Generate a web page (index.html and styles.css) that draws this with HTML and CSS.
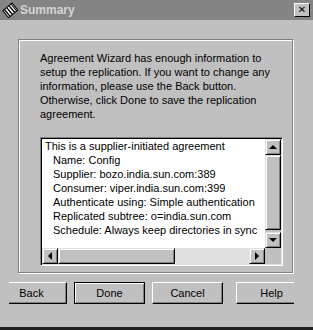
FILE: index.html
```html
<!DOCTYPE html>
<html lang="en">
<head>
<meta charset="UTF-8">
<title>Summary</title>
<link rel="stylesheet" href="styles.css">
</head>
<body>

<div class="window">
    <div class="titlebar">
        <svg class="app-icon" width="16" height="16" viewBox="0 0 16 16">
            <g transform="rotate(-40 8 8)">
                <rect x="2" y="4" width="12" height="9" fill="#fff" stroke="#000" stroke-width="1"/>
                <line x1="4" y1="4" x2="4" y2="13" stroke="#000" stroke-width="1.4"/>
                <line x1="7" y1="4" x2="7" y2="13" stroke="#000" stroke-width="1.4"/>
                <line x1="10" y1="4" x2="10" y2="13" stroke="#000" stroke-width="1.4"/>
                <line x1="12.5" y1="4" x2="12.5" y2="13" stroke="#000" stroke-width="1"/>
            </g>
        </svg>
        <span class="title">Summary</span>
        <button class="close-btn">&#x2715;</button>
    </div>

    <div class="content">
        <div class="panel">
            <p class="intro">Agreement Wizard has enough information to setup the replication. If you want to change any information, please use the Back button. Otherwise, click Done to save the replication agreement.</p>

            <div class="listbox">
                <div class="list-main">
                    <div class="list-text">
                        <div class="line">This is a supplier-initiated agreement</div>
                        <div class="line sub">Name: Config</div>
                        <div class="line sub">Supplier: bozo.india.sun.com:389</div>
                        <div class="line sub">Consumer: viper.india.sun.com:399</div>
                        <div class="line sub">Authenticate using: Simple authentication</div>
                        <div class="line sub">Replicated subtree: o=india.sun.com</div>
                        <div class="line sub">Schedule: Always keep directories in sync</div>
                    </div>
                    <div class="vscroll">
                        <div class="sb-btn"><span class="arrow up"></span></div>
                        <div class="sb-thumb v-thumb"></div>
                        <div class="sb-track v-track"></div>
                        <div class="sb-btn"><span class="arrow down"></span></div>
                    </div>
                </div>
                <div class="list-bottom">
                    <div class="hscroll">
                        <div class="sb-btn"><span class="arrow left"></span></div>
                        <div class="sb-thumb h-thumb"></div>
                        <div class="sb-track h-track"></div>
                        <div class="sb-btn"><span class="arrow right"></span></div>
                    </div>
                    <div class="corner"></div>
                </div>
            </div>
        </div>

        <div class="buttons">
            <div class="button-row">
                <button class="btn back">Back</button>
                <button class="btn default">Done</button>
                <button class="btn">Cancel</button>
                <button class="btn help">Help</button>
            </div>
        </div>
    </div>
</div>

</body>
</html>
```

FILE: styles.css
```css
body {
    margin: 0;
    padding: 0;
    background-color: #c0c0c0;
    font-family: "Liberation Sans", Arial, sans-serif;
    font-size: 11px;
    color: #000;
}
.window {
    width: 313px;
    height: 330px;
    box-sizing: border-box;
    border-bottom: 3px solid #202020;
    display: flex;
    flex-direction: column;
}
.titlebar {
    height: 20px;
    background-color: #848484;
    display: flex;
    align-items: center;
    padding: 0 3px 0 2px;
}
.app-icon {
    display: block;
}
.title {
    margin-left: 2px;
    font-weight: bold;
    font-size: 12px;
    color: #d4d4d4;
    flex: 1;
}
.close-btn {
    width: 16px;
    height: 14px;
    padding: 0;
    margin: 0;
    box-sizing: border-box;
    background-color: #c0c0c0;
    border: 1px solid;
    border-color: #fff #000 #000 #fff;
    font-size: 10px;
    font-weight: bold;
    line-height: 12px;
    font-family: "DejaVu Sans", sans-serif;
    color: #000;
}
.content {
    flex: 1;
    padding: 19px 20px 0 18px;
}
.panel {
    height: 234px;
    box-sizing: border-box;
    border: 1px solid #808080;
    box-shadow: inset 1px 1px 0 #fff, 1px 1px 0 #fff;
    padding: 11px 9px 0 21px;
}
.intro {
    margin: 0;
    line-height: 14px;
    width: 235px;
}
.listbox {
    margin-top: 16px;
    width: 243px;
    height: 129px;
    box-sizing: border-box;
    border: 1px solid;
    border-color: #808080 #fff #fff #808080;
    box-shadow: inset 1px 1px 0 #000, inset -1px -1px 0 #dfdfdf;
    padding: 1px;
    background-color: #fff;
    display: flex;
    flex-direction: column;
}
.list-main {
    display: flex;
    height: 109px;
}
.list-text {
    flex: 1;
    overflow: hidden;
    padding: 0 0 0 3px;
}
.line {
    line-height: 14px;
    white-space: nowrap;
}
.sub {
    padding-left: 8px;
}
.vscroll {
    width: 16px;
    display: flex;
    flex-direction: column;
}
.sb-btn {
    width: 16px;
    height: 16px;
    box-sizing: border-box;
    background-color: #c0c0c0;
    border: 1px solid;
    border-color: #dfdfdf #000 #000 #dfdfdf;
    box-shadow: inset 1px 1px 0 #fff, inset -1px -1px 0 #808080;
    display: flex;
    align-items: center;
    justify-content: center;
}
.sb-thumb {
    box-sizing: border-box;
    background-color: #c0c0c0;
    border: 1px solid;
    border-color: #dfdfdf #000 #000 #dfdfdf;
    box-shadow: inset 1px 1px 0 #fff, inset -1px -1px 0 #808080;
}
.v-thumb {
    height: 75px;
}
.v-track {
    flex: 1;
    background-color: #c0c0c0;
}
.list-bottom {
    display: flex;
    height: 16px;
}
.hscroll {
    flex: 1;
    display: flex;
}
.h-thumb {
    width: 117px;
}
.h-track {
    flex: 1;
    background-color: #e0e0e0;
}
.corner {
    width: 16px;
    background-color: #c0c0c0;
}
.arrow {
    width: 0;
    height: 0;
    border-style: solid;
    border-color: transparent;
}
.arrow.up {
    border-width: 0 4px 4px 4px;
    border-bottom-color: #000;
}
.arrow.down {
    border-width: 4px 4px 0 4px;
    border-top-color: #000;
}
.arrow.left {
    border-width: 4px 4px 4px 0;
    border-right-color: #000;
}
.arrow.right {
    border-width: 4px 0 4px 4px;
    border-left-color: #000;
}
.buttons {
    margin: 9px -1px 0 -9px;
    overflow: hidden;
}
.button-row {
    display: flex;
    margin-left: -13px;
}
.btn {
    width: 71px;
    height: 22px;
    margin: 0 7px 0 0;
    padding: 0;
    box-sizing: border-box;
    background-color: #c0c0c0;
    font-family: "Liberation Sans", Arial, sans-serif;
    font-size: 11px;
    color: #000;
    border: 1px solid;
    border-color: #fff #000 #000 #fff;
    box-shadow: inset -1px -1px 0 #808080;
    flex-shrink: 0;
}
.btn.default {
    border: 1px solid #000;
    box-shadow: inset 1px 1px 0 #fff, inset -1px -1px 0 #808080;
}
.btn.help {
    margin-left: 6px;
}
```
